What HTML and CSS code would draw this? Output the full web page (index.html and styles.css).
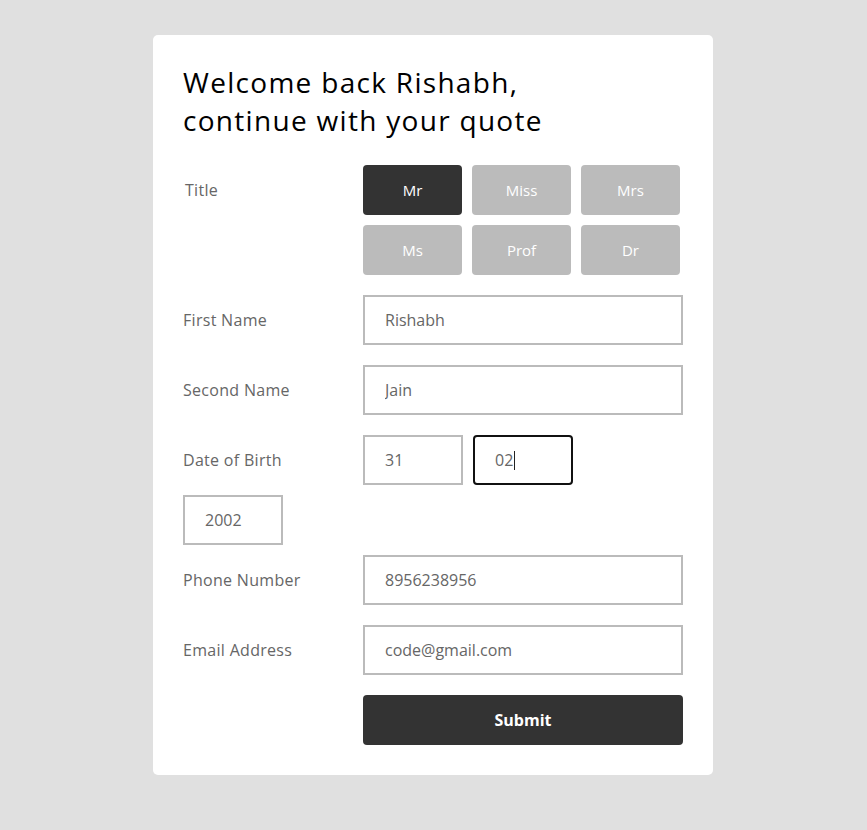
FILE: index.html
```html
<!DOCTYPE html>
<html>
<head>
<meta charset="utf-8">
<link rel="stylesheet" href="styles.css">
</head>
<body>
<div class="card">
  <h1 class="heading"><span class="hline">Welcome back Rishabh,</span><span class="hline">continue with your quote</span></h1>
  <div class="row">
    <div class="label label-title">Title</div>
    <div class="titles">
      <button class="tbtn active">Mr</button>
      <button class="tbtn">Miss</button>
      <button class="tbtn">Mrs</button>
      <button class="tbtn">Ms</button>
      <button class="tbtn">Prof</button>
      <button class="tbtn">Dr</button>
    </div>
  </div>
  <div class="row">
    <div class="label">First Name</div>
    <input class="field wide" value="Rishabh">
  </div>
  <div class="row">
    <div class="label">Second Name</div>
    <input class="field wide" value="Jain">
  </div>
  <div class="row dob">
    <div class="label">Date of Birth</div>
    <input class="field small" value="31">
    <div class="field small focused">02<span class="caret"></span></div>
  </div>
  <div class="row dob-year">
    <input class="field small" value="2002">
  </div>
  <div class="row">
    <div class="label">Phone Number</div>
    <input class="field wide" value="8956238956">
  </div>
  <div class="row">
    <div class="label">Email Address</div>
    <input class="field wide" value="code@gmail.com">
  </div>
  <div class="row">
    <div class="label"></div>
    <button class="submit">Submit</button>
  </div>
</div>
</body>
</html>
```
FILE: styles.css
```css
* { box-sizing: border-box; }
body {
  margin: 0;
  padding: 35px 1px 0 0;
  background: #e0e0e0;
  font-family: "Open Sans", Lato, sans-serif;
}
.card {
  width: 560px;
  margin: 0 auto;
  background: #fff;
  border-radius: 5px;
  padding: 28px 30px 30px 30px;
}
.heading {
  margin: 0 0 26px 0;
  font-size: 28px;
  line-height: 38px;
  font-weight: 500;
  letter-spacing: 1.3px;
  color: #000;
}
.hline {
  display: block;
}
.row {
  display: flex;
  align-items: center;
  margin-bottom: 20px;
}
.row.dob, .row.dob-year { margin-bottom: 10px; }
.row:last-child { margin-bottom: 0; }
.label {
  width: 180px;
  flex: none;
  font-size: 16px;
  letter-spacing: 0.3px;
  color: #666;
}
.label-title {
  align-self: flex-start;
  line-height: 50px;
  padding-left: 2px;
}
.titles {
  display: grid;
  grid-template-columns: repeat(3, 99px);
  gap: 10px 10px;
}
.tbtn {
  height: 50px;
  border: none;
  border-radius: 4px;
  background: #bbb;
  color: #fff;
  font-family: inherit;
  font-size: 15px;
  padding: 0;
}
.tbtn.active { background: #333; }
.field {
  height: 50px;
  border: 2px solid #bbb;
  padding: 0 20px;
  font-family: inherit;
  font-size: 16px;
  color: #666;
  background: #fff;
  outline: none;
  border-radius: 0;
}
.wide { width: 320px; }
.small { width: 100px; }
.dob .small + .small { margin-left: 10px; }
.focused {
  display: flex;
  align-items: center;
  border-color: #111;
  border-radius: 4px;
}
.caret {
  display: inline-block;
  width: 1px;
  height: 19px;
  background: #222;
  margin-left: 1px;
}
.submit {
  width: 320px;
  height: 50px;
  border: none;
  border-radius: 4px;
  background: #333;
  color: #fff;
  font-family: inherit;
  font-weight: 700;
  font-size: 16px;
}
```
